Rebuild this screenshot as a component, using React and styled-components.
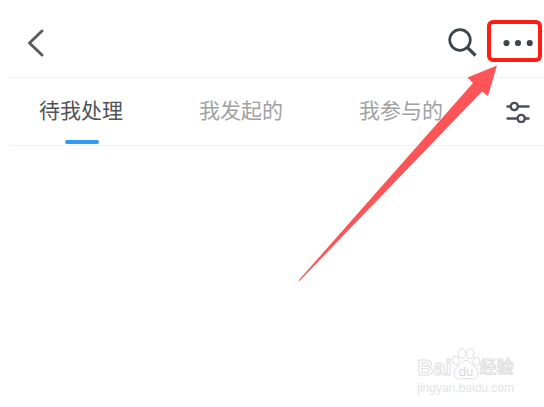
import React, { useState } from 'react'
import styled, { createGlobalStyle } from 'styled-components'

const tabs = ['待我处理', '我发起的', '我参与的']

const App = () => {
  const [active, setActive] = useState(0)

  return (
    <Page>
      <GlobalStyle />
      <Header>
        <IconButton aria-label="返回">
          <svg width="18" height="28" viewBox="0 0 18 28" fill="none" stroke="#5a5d60" strokeWidth="3" strokeLinecap="round" strokeLinejoin="round">
            <path d="M15 2 2.5 14 15 26" />
          </svg>
        </IconButton>
        <Actions>
          <IconButton aria-label="搜索">
            <svg width="30" height="30" viewBox="0 0 30 30" fill="none" stroke="#3f464b" strokeWidth="2.7">
              <circle cx="13" cy="12" r="10.3" />
              <path d="M20.3 19.3 28.5 27.5" strokeWidth="3.2" />
            </svg>
          </IconButton>
          <MoreButton aria-label="更多">
            <svg width="32" height="8" viewBox="0 0 32 8" fill="#3f464b">
              <circle cx="3.5" cy="4" r="3.1" />
              <circle cx="15" cy="4" r="3.1" />
              <circle cx="26.7" cy="4" r="3.1" />
            </svg>
          </MoreButton>
        </Actions>
      </Header>
      <TabBar>
        <TabList role="tablist">
          {tabs.map((tab, i) => (
            <Tab key={tab} role="tab" aria-selected={i === active} $active={i === active} onClick={() => setActive(i)}>
              {tab}
            </Tab>
          ))}
        </TabList>
        <IconButton aria-label="筛选">
          <svg width="24" height="22" viewBox="0 0 24 22" fill="none" stroke="#4a5054" strokeWidth="2.4" strokeLinecap="round">
            <path d="M1.5 5.5H4.5M12 5.5h10.5M1.5 17.5H11M19 17.5h3.5" />
            <circle cx="8.3" cy="5.5" r="3.6" />
            <circle cx="15.2" cy="17.5" r="3.6" />
          </svg>
        </IconButton>
      </TabBar>
      <Arrow width="200" height="217" viewBox="0 0 200 217" aria-hidden="true">
        <path d="M199 0.5 169.500 12.500 175 18 .5 215.500 1.500 216 184 26.500 190 31Z" fill="#fd5557" />
      </Arrow>
      <Watermark>
        <Brand>
          <BrandText>Bai</BrandText>
          <Paw viewBox="0 0 28 32" width="28" height="32">
            <ellipse cx="3.8" cy="12.5" rx="3.3" ry="4.3" transform="rotate(-15 3.8 12.5)" />
            <ellipse cx="10" cy="5.4" rx="3.5" ry="4.8" />
            <ellipse cx="18.3" cy="5.8" rx="3.5" ry="4.8" transform="rotate(12 18.3 5.8)" />
            <ellipse cx="24.2" cy="13.5" rx="3.3" ry="4.3" transform="rotate(15 24.2 13.5)" />
            <path d="M14 12.500c-4 0-4.500 3.500-8 6-5.500 4-5 12.500 1.500 12.500 2.500 0 4-.5 6.500-.5s4 .5 6.500 .5c6.500 0 7-8.500 2-12.500-3.500-2.500-4.500-6-8.500-6Z" />
            <text x="14" y="28">du</text>
          </Paw>
          <BrandText $small>经验</BrandText>
        </Brand>
        <Site>jingyan.baidu.com</Site>
      </Watermark>
    </Page>
  )
}

const GlobalStyle = createGlobalStyle`
  * {
    box-sizing: border-box;
  }
  body {
    margin: 0;
    background: #fff;
    font-family: "Liberation Sans", "Noto Sans CJK SC", sans-serif;
  }
`

const Page = styled.div`
  position: relative;
  min-height: 100vh;
  padding: 8px 0 0 9px;
  overflow: hidden;
`

const Header = styled.header`
  display: flex;
  align-items: center;
  justify-content: space-between;
  height: 70px;
  padding: 0 2px 0 18px;
  border-bottom: 1px solid #f3f3f3;
`

const Actions = styled.div`
  display: flex;
  align-items: center;
  gap: 10px;
`

const IconButton = styled.button`
  display: flex;
  align-items: center;
  justify-content: center;
  padding: 0;
  border: 0;
  background: none;
  cursor: pointer;
`

const MoreButton = styled(IconButton)`
  position: relative;
  width: 55px;
  height: 46px;
  padding-left: 8px;

  &::after {
    content: '';
    position: absolute;
    inset: 0 0 4px;
    border: 4px solid #fd1d14;
    border-radius: 6px;
  }
`

const TabBar = styled.nav`
  display: flex;
  align-items: center;
  justify-content: space-between;
  height: 68px;
  padding: 0 14px 0 30px;
  border-bottom: 1px solid #f3f3f3;
`

const TabList = styled.div`
  display: flex;
  align-self: stretch;
  gap: 76px;
`

const Tab = styled.button`
  position: relative;
  padding: 0 0 2px;
  border: 0;
  background: none;
  font-family: inherit;
  font-size: 21px;
  line-height: 30px;
  white-space: nowrap;
  color: ${({ $active }) => ($active ? '#505356' : '#a0a2a2')};
  cursor: pointer;

  &::after {
    content: '';
    display: ${({ $active }) => ($active ? 'block' : 'none')};
    position: absolute;
    left: 50%;
    bottom: 1px;
    width: 34px;
    height: 4px;
    margin-left: -16px;
    border-radius: 2px;
    background: #329af3;
  }
`

const Arrow = styled.svg`
  position: absolute;
  top: 65px;
  right: 46px;
  pointer-events: none;
`

const Watermark = styled.div`
  position: absolute;
  right: 30px;
  bottom: 11px;
  color: #fff;
`

const Brand = styled.div`
  display: flex;
  align-items: flex-end;
`

const BrandText = styled.span`
  font-size: ${({ $small }) => ($small ? '17px' : '22px')};
  line-height: 24px;
  font-weight: ${({ $small }) => ($small ? 500 : 700)};
  -webkit-text-stroke: 1px #e0e0e0;
`

const Paw = styled.svg`
  fill: #fff;
  stroke: #dedede;

  text {
    font-size: 13px;
    font-weight: 400;
    text-anchor: middle;
    fill: #d8d8d8;
    stroke: none;
  }
`

const Site = styled.div`
  font-size: 12px;
  line-height: 16px;
  color: #e4e4e4;
`

export default App
